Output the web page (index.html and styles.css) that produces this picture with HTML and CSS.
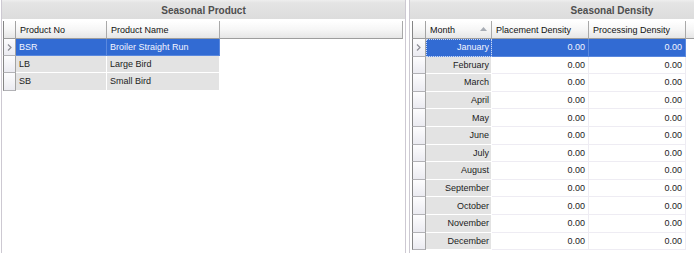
FILE: index.html
```html
<!DOCTYPE html>
<html>
<head>
<meta charset="utf-8">
<link rel="stylesheet" href="styles.css">
</head>
<body>
<div class="screen">
  <section class="panel panel-left">
    <div class="title">Seasonal Product</div>
    <div class="grid grid-product">
      <div class="hcell ind"></div>
      <div class="hcell">Product No</div>
      <div class="hcell">Product Name</div>
      <div class="hcell fill"></div>

      <div class="ind"><svg class="cur" width="5" height="7" viewBox="0 0 5 7"><polyline points="1,0.5 4,3.5 1,6.5" fill="none" stroke="#8c8c94" stroke-width="1.2"/></svg></div>
      <div class="cell ro sel">BSR</div>
      <div class="cell ro sel">Broiler Straight Run</div>
      <div class="blank"></div>

      <div class="ind"></div>
      <div class="cell ro">LB</div>
      <div class="cell ro">Large Bird</div>
      <div class="blank"></div>

      <div class="ind"></div>
      <div class="cell ro">SB</div>
      <div class="cell ro">Small Bird</div>
      <div class="blank"></div>
    </div>
  </section>

  <section class="panel panel-right">
    <div class="title">Seasonal Density</div>
    <div class="grid grid-density">
      <div class="hcell ind"></div>
      <div class="hcell sort">Month<svg class="tri" width="7" height="4" viewBox="0 0 7 4"><polygon points="0,4 3.5,0 7,4" fill="#a7acb4"/></svg></div>
      <div class="hcell">Placement Density</div>
      <div class="hcell">Processing Density</div>
      <div class="hcell fill"></div>

      <div class="ind"><svg class="cur" width="5" height="7" viewBox="0 0 5 7"><polyline points="1,0.5 4,3.5 1,6.5" fill="none" stroke="#8c8c94" stroke-width="1.2"/></svg></div>
      <div class="cell ro num sel focus">January</div>
      <div class="cell val num sel">0.00</div>
      <div class="cell val num sel">0.00</div>
      <div class="blank"></div>

      <div class="ind"></div><div class="cell ro num">February</div><div class="cell val num">0.00</div><div class="cell val num">0.00</div><div class="blank"></div>
      <div class="ind"></div><div class="cell ro num">March</div><div class="cell val num">0.00</div><div class="cell val num">0.00</div><div class="blank"></div>
      <div class="ind"></div><div class="cell ro num">April</div><div class="cell val num">0.00</div><div class="cell val num">0.00</div><div class="blank"></div>
      <div class="ind"></div><div class="cell ro num">May</div><div class="cell val num">0.00</div><div class="cell val num">0.00</div><div class="blank"></div>
      <div class="ind"></div><div class="cell ro num">June</div><div class="cell val num">0.00</div><div class="cell val num">0.00</div><div class="blank"></div>
      <div class="ind"></div><div class="cell ro num">July</div><div class="cell val num">0.00</div><div class="cell val num">0.00</div><div class="blank"></div>
      <div class="ind"></div><div class="cell ro num">August</div><div class="cell val num">0.00</div><div class="cell val num">0.00</div><div class="blank"></div>
      <div class="ind"></div><div class="cell ro num">September</div><div class="cell val num">0.00</div><div class="cell val num">0.00</div><div class="blank"></div>
      <div class="ind"></div><div class="cell ro num">October</div><div class="cell val num">0.00</div><div class="cell val num">0.00</div><div class="blank"></div>
      <div class="ind"></div><div class="cell ro num">November</div><div class="cell val num">0.00</div><div class="cell val num">0.00</div><div class="blank"></div>
      <div class="ind"></div><div class="cell ro num">December</div><div class="cell val num">0.00</div><div class="cell val num">0.00</div><div class="blank"></div>
    </div>
  </section>
</div>
</body>
</html>
```

FILE: styles.css
```css
html, body {
  margin: 0;
  padding: 0;
  background: #ffffff;
}

.screen {
  width: 694px;
  height: 255px;
  overflow: hidden;
  display: flex;
  gap: 3px;
  font-family: "Liberation Sans", Arial, sans-serif;
  font-size: 9px;
  color: #1c1c1c;
}

.panel {
  flex: none;
  height: 253px;
  display: flex;
  flex-direction: column;
  border-left: 1px solid #cdc9d2;
  border-right: 1px solid #cdc9d2;
  box-sizing: border-box;
}

.panel-left {
  margin-left: 1px;
  width: 405px;
}

.panel-right {
  width: 406px;
}

.title {
  height: 20px;
  flex: none;
  display: flex;
  align-items: center;
  justify-content: center;
  background: linear-gradient(#eeeeee 0, #e4e4e4 3px, #dcdcdc 100%);
  font-size: 10px;
  font-weight: bold;
  color: #4e4e4e;
  border-bottom: 1px solid #ffffff;
  padding-top: 1px;
  box-sizing: border-box;
}

.grid {
  display: grid;
  margin-top: 1px;
}

.grid-product {
  margin-left: 1px;
  margin-right: 2px;
  grid-template-columns: 13px 91px 113px 1fr;
  grid-template-rows: 18px;
  grid-auto-rows: 17.2px;
}

.grid-density {
  margin-left: 2px;
  grid-template-columns: 14px 66px 97px 97px 1fr;
  grid-template-rows: 18px;
  grid-auto-rows: 17.6px;
}

.hcell {
  box-sizing: border-box;
  display: flex;
  align-items: center;
  padding-left: 4px;
  background: linear-gradient(#ffffff 0%, #f6f6f6 50%, #e6e6e6 100%);
  border-right: 1px solid #a9a9a9;
  border-bottom: 1px solid #9d9d9d;
  color: #111111;
  white-space: nowrap;
  overflow: hidden;
}

.hcell.sort {
  justify-content: space-between;
  padding-right: 4px;
}

.tri {
  display: block;
  margin-top: -2px;
}

.ind {
  box-sizing: border-box;
  padding: 0;
  border-left: 1px solid #858585;
  border-right: 1px solid #a3a3a3;
  border-bottom: 1px solid #b2b2b6;
  background: linear-gradient(#fdfdfe, #ebebf1);
  display: flex;
  align-items: center;
  padding-left: 3px;
}

.hcell.ind {
  border-bottom: 1px solid #9d9d9d;
  background: linear-gradient(#ffffff 0%, #f6f6f6 50%, #e6e6e6 100%);
}

.cur {
  display: block;
}

.cell {
  box-sizing: border-box;
  display: flex;
  align-items: center;
  padding: 0 2px 0 3px;
  white-space: nowrap;
  overflow: hidden;
}

.cell.ro {
  background: #e3e3e3;
  border-right: 1px solid #ffffff;
  border-bottom: 1px solid #ffffff;
}

.cell.val {
  background: #ffffff;
  border-right: 1px solid #eeecf3;
  border-bottom: 1px solid #eeecf3;
  padding-right: 3px;
}

.cell.num {
  justify-content: flex-end;
}

.cell.sel {
  background: #326bd3;
  color: #f2f5ff;
  border-right-color: #5a88de;
  border-bottom-color: #5a88de;
}

.cell.focus {
  outline: 1px dotted #c9d8f6;
  outline-offset: -1px;
}

.blank {
  background: #ffffff;
}
```
